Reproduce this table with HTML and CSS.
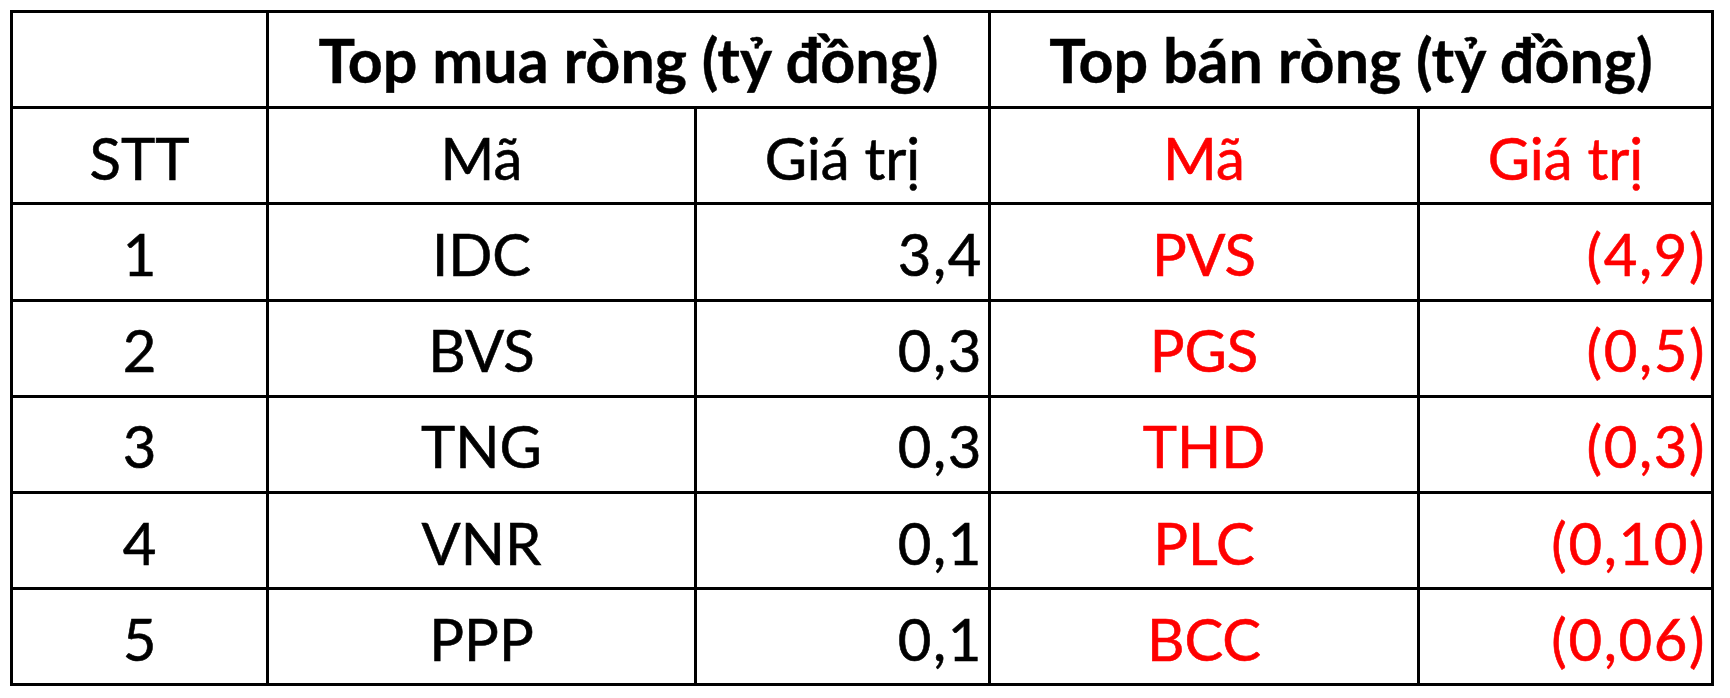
FILE: index.html
```html
<!DOCTYPE html>
<html lang="vi">
<head>
<meta charset="utf-8">
<title>Top mua bán ròng</title>
<link rel="stylesheet" href="styles.css">
</head>
<body>
<table class="grid">
  <colgroup>
    <col class="c-stt">
    <col class="c-ma">
    <col class="c-val">
    <col class="c-ma2">
    <col class="c-val2">
  </colgroup>
  <tr class="head">
    <td></td>
    <td colspan="2" class="title">Top mua ròng (tỷ đồng)</td>
    <td colspan="2" class="title">Top bán ròng (tỷ đồng)</td>
  </tr>
  <tr>
    <td class="center">STT</td>
    <td class="center">Mã</td>
    <td class="center">Giá trị</td>
    <td class="center red">Mã</td>
    <td class="center red">Giá trị</td>
  </tr>
  <tr>
    <td class="center">1</td>
    <td class="center">IDC</td>
    <td class="num">3,4</td>
    <td class="center red">PVS</td>
    <td class="num red">(4,9)</td>
  </tr>
  <tr>
    <td class="center">2</td>
    <td class="center">BVS</td>
    <td class="num">0,3</td>
    <td class="center red">PGS</td>
    <td class="num red">(0,5)</td>
  </tr>
  <tr>
    <td class="center">3</td>
    <td class="center">TNG</td>
    <td class="num">0,3</td>
    <td class="center red">THD</td>
    <td class="num red">(0,3)</td>
  </tr>
  <tr>
    <td class="center">4</td>
    <td class="center">VNR</td>
    <td class="num">0,1</td>
    <td class="center red">PLC</td>
    <td class="num red">(0,10)</td>
  </tr>
  <tr>
    <td class="center">5</td>
    <td class="center">PPP</td>
    <td class="num">0,1</td>
    <td class="center red">BCC</td>
    <td class="num red">(0,06)</td>
  </tr>
</table>
</body>
</html>
```
FILE: styles.css
```css
html, body {
  margin: 0;
  padding: 0;
  background: #ffffff;
}

body {
  padding: 10px 0 0 10px;
  font-family: "Lato", "Open Sans", "Liberation Sans", sans-serif;
  color: #000000;
}

.grid {
  border-collapse: collapse;
  table-layout: fixed;
  width: 1704px;
}

.c-stt { width: 256px; }
.c-ma { width: 428px; }
.c-val { width: 294px; }
.c-ma2 { width: 429px; }
.c-val2 { width: 294px; }

.grid td {
  border: 3px solid #000000;
  height: 96.2px;
  padding: 4px 6px 0 6px;
  box-sizing: border-box;
  font-size: 58px;
  line-height: 1;
  vertical-align: middle;
  white-space: nowrap;
  -webkit-text-stroke: 0.6px currentColor;
}

.grid td.title {
  text-align: center;
  font-weight: 700;
  font-size: 61px;
  padding-top: 0;
  -webkit-text-stroke: 0.4px currentColor;
}

.center { text-align: center; }

.grid td.num {
  text-align: right;
  letter-spacing: 1.6px;
  padding-right: 5px;
}

.red { color: #ff0000; }
```
